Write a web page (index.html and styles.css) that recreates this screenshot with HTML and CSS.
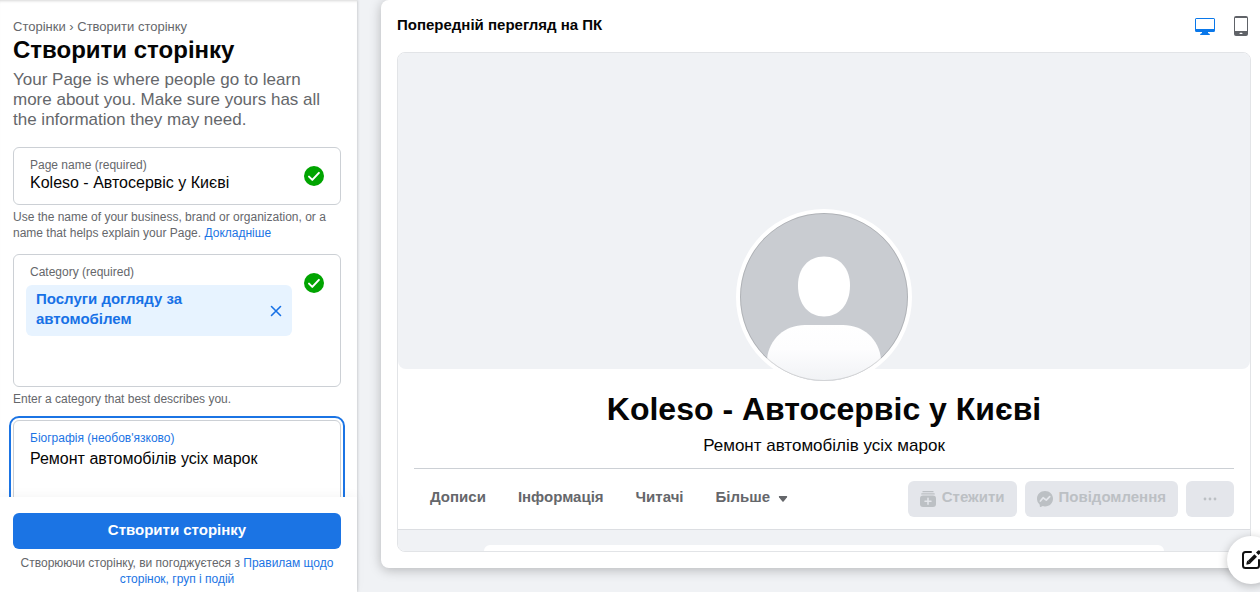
FILE: index.html
```html
<!DOCTYPE html>
<html lang="uk">
<head>
<meta charset="utf-8">
<meta name="viewport" content="width=device-width, initial-scale=1">
<title>Створити сторінку</title>
<link rel="stylesheet" href="styles.css">
</head>
<body>
<div class="app">
  <aside class="sidebar">
    <form class="form" id="page-form">
      <nav class="crumbs"><a href="#">Сторінки</a> › <a href="#">Створити сторінку</a></nav>
      <h1 class="title">Створити сторінку</h1>
      <p class="intro">Your Page is where people go to learn more about you. Make sure yours has all the information they may need.</p>

      <div class="field">
        <div class="field-main">
          <label class="label" for="name">Page name (required)</label>
          <input class="input" id="name" type="text" value="Koleso - Автосервіс у Києві">
        </div>
        <svg class="check" viewBox="0 0 20 20" aria-hidden="true"><circle cx="10" cy="10" r="10" fill="#00a400"/><path d="M5 10.600l3.300 3.300 6.600-7" fill="none" stroke="#fff" stroke-width="2" stroke-linecap="round" stroke-linejoin="round"/></svg>
      </div>
      <p class="help">Use the name of your business, brand or organization, or a name that helps explain your Page. <a href="#">Докладніше</a></p>

      <div class="field field-category">
        <div class="field-main">
          <label class="label" for="category">Category (required)</label>
          <div class="tag">
            <span class="tag-text">Послуги догляду за автомобілем</span>
            <button class="tag-remove" type="button" aria-label="Вилучити">
              <svg class="cross" viewBox="0 0 12 12"><path d="M1.500 1.500l9 9M10.500 1.500l-9 9" fill="none" stroke="#1771e6" stroke-width="1.600" stroke-linecap="round"/></svg>
            </button>
          </div>
          <input class="input" id="category" type="text">
        </div>
        <svg class="check" viewBox="0 0 20 20" aria-hidden="true"><circle cx="10" cy="10" r="10" fill="#00a400"/><path d="M5 10.600l3.300 3.300 6.600-7" fill="none" stroke="#fff" stroke-width="2" stroke-linecap="round" stroke-linejoin="round"/></svg>
      </div>
      <p class="help">Enter a category that best describes you.</p>

      <div class="field field-bio">
        <div class="field-main">
          <label class="label" for="bio">Біографія (необов'язково)</label>
          <textarea class="input textarea" id="bio" rows="4">Ремонт автомобілів усіх марок</textarea>
        </div>
      </div>
    </form>
    <footer class="submit-bar">
      <button class="submit" type="submit" form="page-form">Створити сторінку</button>
      <p class="terms">Створюючи сторінку, ви погоджуєтеся з <a href="#">Правилам щодо сторінок, груп і подій</a></p>
    </footer>
  </aside>

  <main class="main">
    <section class="card">
      <header class="card-head">
        <h2 class="card-title">Попередній перегляд на ПК</h2>
        <button class="device" type="button" aria-label="ПК">
          <svg viewBox="0 0 20 20"><path fill="#0a78ea" fill-rule="evenodd" d="M1.500 2h17A1.500 1.500 0 0 1 20 3.500v11a1.500 1.500 0 0 1-1.500 1.500H13v1l1.800 1v1H5.200v-1L7 17v-1H1.500A1.500 1.500 0 0 1 0 14.500v-11A1.500 1.500 0 0 1 1.500 2zM1 3v10h18V3z"/></svg>
        </button>
        <button class="device" type="button" aria-label="Мобільний пристрій">
          <svg viewBox="0 0 20 20"><path fill="#606368" fill-rule="evenodd" d="M5 0h10a2 2 0 0 1 2 2v16a2 2 0 0 1-2 2H5a2 2 0 0 1-2-2V2a2 2 0 0 1 2-2zM4 2v13h12V2z"/><rect x="8.500" y="16.700" width="3" height="1.400" rx=".7" fill="#fff"/></svg>
        </button>
      </header>

      <div class="preview">
        <div class="cover"></div>
        <div class="profile">
          <svg class="avatar" viewBox="0 0 176 176" role="img" aria-label="Фото профілю">
            <defs>
              <linearGradient id="body" x1="0" y1="0" x2="0" y2="1"><stop offset="0" stop-color="#fff"/><stop offset=".4" stop-color="#fdfdfe"/><stop offset="1" stop-color="#eff1f4"/></linearGradient>
              <clipPath id="round"><circle cx="88" cy="88" r="84"/></clipPath>
            </defs>
            <circle cx="88" cy="88" r="88" fill="#fff"/>
            <circle cx="88" cy="88" r="84" fill="#c9ccd1"/>
            <path d="M88 47.500c16 0 26 12 26 29 0 19-11 31-26 31s-26-12-26-31c0-17 10-29 26-29z" fill="#fff"/>
            <path clip-path="url(#round)" d="M31 150c2-20 18-34 38-34h38c20 0 36 14 38 34v26H31z" fill="url(#body)"/>
            <circle cx="88" cy="88" r="83.500" fill="none" stroke="#000" stroke-opacity=".13"/>
          </svg>
          <h3 class="page-name">Koleso - Автосервіс у Києві</h3>
          <p class="page-bio">Ремонт автомобілів усіх марок</p>
          <div class="bar">
            <nav class="tabs">
              <a class="tab" href="#">Дописи</a>
              <a class="tab" href="#">Інформація</a>
              <a class="tab" href="#">Читачі</a>
              <a class="tab" href="#">Більше <svg class="caret" viewBox="0 0 10 8"><path d="M1.600 1h6.800c.7 0 1 .7.600 1.200L5.600 6.400a.8.8 0 0 1-1.200 0L1 2.200C.6 1.700.900 1 1.600 1z" fill="#65676b"/></svg></a>
            </nav>
            <div class="actions">
              <button class="action" type="button" disabled>
                <svg class="action-icon" viewBox="0 0 16 16"><path d="M3 .7h10M1.800 2.900h12.400" stroke="#bcc0c4" stroke-width="1.300" stroke-linecap="round"/><rect y="4.500" width="16" height="11.500" rx="3" fill="#bcc0c4"/><path d="M8 7.200v6M5 10.200h6" stroke="#e4e6eb" stroke-width="1.500" stroke-linecap="round"/></svg>
                Стежити
              </button>
              <button class="action" type="button" disabled>
                <svg class="action-icon" viewBox="0 0 16 16"><path d="M8 0c4.600 0 8 3.300 8 7.700s-3.400 7.700-8 7.700c-.8 0-1.600-.1-2.300-.3l-2 .8a.7.7 0 0 1-.9-.6l-.1-1.500A7.500 7.500 0 0 1 0 7.700C0 3.300 3.400 0 8 0z" fill="#bcc0c4"/><path d="M3.400 10l2.700-3.300 3.200 2.400 3.400-3.400" fill="none" stroke="#e4e6eb" stroke-width="1.700" stroke-linecap="round" stroke-linejoin="round"/></svg>
                Повідомлення
              </button>
              <button class="action action-more" type="button" disabled aria-label="Більше">
                <svg class="action-icon" viewBox="0 0 16 16" fill="#bcc0c4"><circle cx="3" cy="8" r="1.400"/><circle cx="8" cy="8" r="1.400"/><circle cx="13" cy="8" r="1.400"/></svg>
              </button>
            </div>
          </div>
        </div>
        <div class="feed"><div class="post"></div></div>
      </div>
    </section>
  </main>
</div>
<button class="compose" type="button" aria-label="Нове повідомлення">
  <svg viewBox="0 0 20 20"><path d="M10 2H4.500A2.500 2.500 0 0 0 2 4.500v11A2.500 2.500 0 0 0 4.500 18h11a2.500 2.500 0 0 0 2.500-2.500V10" fill="none" stroke="#111" stroke-width="2" stroke-linecap="round"/><path d="M8 12.200l6.700-6.700" stroke="#111" stroke-width="3.600"/><path d="M6.200 10.500l3.300 3.300-3.200.800a.7.7 0 0 1-.9-.9zM15 2.600l1.800-1.800a1.400 1.400 0 0 1 2 0l.5.500a1.400 1.400 0 0 1 0 2l-1.800 1.800z" fill="#111"/></svg>
</button>
</body>
</html>
```
FILE: styles.css
```css
* {
  box-sizing: border-box;
}

body {
  margin: 0;
  overflow: hidden;
  background: #f0f2f5;
  color: #050505;
  font-family: "Liberation Sans", Arial, sans-serif;
  font-size: 12px;
  line-height: 16px;
}

h1,
h2,
h3,
p {
  margin: 0;
}

a {
  color: #1b74e4;
  text-decoration: none;
}

button,
input,
textarea {
  font: inherit;
  color: inherit;
}

button {
  border: 0;
  padding: 0;
  background: none;
}

svg {
  display: block;
}

.app {
  display: flex;
  height: 100vh;
}

/* Sidebar */
.sidebar {
  display: flex;
  flex: none;
  flex-direction: column;
  width: 357px;
  background: #fff;
  box-shadow: 0 0 3px rgba(0, 0, 0, 0.25);
}

.form {
  flex: 1;
  min-height: 0;
  overflow: hidden;
  padding: 19px 16px 0 13px;
  box-shadow: inset 0 3px 3px -2px rgba(0, 0, 0, 0.16);
}

.crumbs,
.crumbs a {
  color: #65676b;
}

.crumbs {
  font-size: 13px;
}

.title {
  font-size: 24px;
  line-height: 30px;
}

.intro {
  margin: 5px 0 17px;
  color: #65676b;
  font-size: 17px;
  line-height: 20px;
}

.field {
  display: flex;
  gap: 12px;
  padding: 9px 16px 11px 12px;
  border: 1px solid #ccd0d5;
  border-radius: 6px;
}

.field-main {
  flex: 1;
  min-width: 0;
}

.label {
  display: block;
  padding-left: 4px;
  color: #65676b;
}

.input {
  display: block;
  width: 100%;
  height: 20px;
  border: 0;
  padding: 0 4px;
  outline: 0;
  background: transparent;
  font-size: 16px;
  line-height: 20px;
}

.check {
  flex: none;
  width: 20px;
  height: 20px;
  margin-top: 9px;
}

.help {
  margin: 4px 0 13px;
  color: #65676b;
}

.field-category {
  min-height: 133px;
}

.tag {
  display: flex;
  align-items: center;
  margin: 5px 0;
  padding: 4px 10px 7px;
  border-radius: 6px;
  background: #e7f3ff;
  color: #1771e6;
}

.tag-text {
  flex: 1;
  padding-right: 40px;
  font-size: 15px;
  font-weight: bold;
  line-height: 20px;
}

.tag-remove {
  padding-top: 4px;
}

.cross {
  width: 12px;
  height: 12px;
}

.field-bio {
  min-height: 120px;
  outline: 2px solid #1b74e4;
  outline-offset: 2px;
}

.field-bio .label {
  color: #1b74e4;
}

.textarea {
  height: 80px;
  margin-top: 3px;
  resize: none;
}

.submit-bar {
  padding: 16px 16px 5px 13px;
  background: #fff;
  box-shadow: 0 -2px 10px rgba(0, 0, 0, 0.04);
}

.submit {
  width: 100%;
  height: 36px;
  padding-bottom: 2px;
  border-radius: 6px;
  background: #1b74e4;
  color: #fff;
  font-size: 15px;
  font-weight: bold;
}

.terms {
  margin-top: 6px;
  color: #65676b;
  text-align: center;
}

/* Preview */
.main {
  flex: 1;
  min-width: 0;
  margin-right: -7px;
  padding: 0 0 24px 24px;
}

.card {
  display: flex;
  flex-direction: column;
  height: 100%;
  padding: 0 16px 16px;
  border-radius: 8px;
  background: #fff;
  box-shadow: 0 2px 12px rgba(0, 0, 0, 0.25);
}

.card-head {
  display: flex;
  gap: 16px;
  align-items: center;
  height: 52px;
}

.card-title {
  flex: 1;
  padding-bottom: 2px;
  font-size: 15px;
  line-height: 20px;
}

.device {
  width: 20px;
  height: 20px;
}

.preview {
  display: flex;
  flex: 1;
  flex-direction: column;
  min-height: 0;
  overflow: hidden;
  border: 1px solid #e2e4e7;
  border-radius: 8px;
}

.cover {
  flex: none;
  height: 316px;
  border-radius: 0 0 8px 8px;
  background: #f0f2f5;
}

.profile {
  display: flex;
  flex: none;
  flex-direction: column;
  align-items: center;
  padding: 0 16px;
  border-bottom: 1px solid #dcdee2;
}

.avatar {
  width: 176px;
  height: 176px;
  margin-top: -160px;
}

.page-name {
  margin-top: 5px;
  font-size: 32px;
  line-height: 38px;
}

.page-bio {
  margin: 8px 0 12px;
  font-size: 17px;
  line-height: 20px;
}

.bar {
  display: flex;
  align-items: center;
  justify-content: space-between;
  width: 100%;
  height: 61px;
  border-top: 1px solid #ccd0d5;
}

.tabs,
.actions {
  display: flex;
}

.tab {
  display: flex;
  gap: 8px;
  align-items: center;
  padding: 0 16px 4px;
  color: #65676b;
  font-size: 15px;
  font-weight: bold;
  line-height: 20px;
}

.caret {
  width: 10px;
  height: 8px;
  margin-top: 4px;
}

.actions {
  gap: 8px;
}

.action {
  display: flex;
  gap: 6px;
  align-items: center;
  justify-content: center;
  height: 36px;
  padding: 0 12px 4px;
  border-radius: 6px;
  background: #e4e6eb;
  color: #bcc0c4;
  font-size: 15px;
  font-weight: bold;
  line-height: 20px;
}

.action-icon {
  width: 16px;
  height: 16px;
  margin-top: 4px;
}

.action-more {
  width: 48px;
}

.feed {
  flex: 1;
  padding: 15px 16px 0;
  background: #f0f2f5;
}

.post {
  max-width: 680px;
  height: 100%;
  margin: 0 auto;
  border-radius: 8px 8px 0 0;
  background: #fff;
}

.compose {
  position: fixed;
  right: -15px;
  bottom: 8px;
  display: flex;
  align-items: center;
  justify-content: center;
  width: 48px;
  height: 48px;
  border-radius: 50%;
  background: #fff;
  box-shadow: 0 2px 10px rgba(0, 0, 0, 0.25);
}

.compose svg {
  width: 20px;
  height: 20px;
}
```
